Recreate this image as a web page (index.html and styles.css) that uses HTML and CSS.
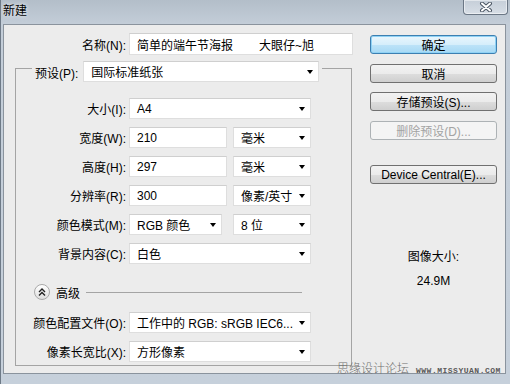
FILE: index.html
```html
<!DOCTYPE html>
<html lang="zh">
<head>
  <meta charset="UTF-8" />
  <title>新建</title>
  <link rel="stylesheet" href="styles.css">
</head>
<body>
  <div class="window">
    <div class="titlebar">
      <span class="title">新建</span>
      <div class="close-button">
        <svg width="16" height="10" viewBox="0 0 16 10">
          <path d="M4 1.5 L12 8.5 M12 1.5 L4 8.5" stroke="#4a5563" stroke-width="4" stroke-linecap="round" />
          <path d="M4 1.5 L12 8.5 M12 1.5 L4 8.5" stroke="#ffffff" stroke-width="2" stroke-linecap="round" />
        </svg>
      </div>
    </div>

    <div class="frame">
      <div class="panel">
        <div class="left-col">
          <div class="row name-row">
            <label class="label name-label">名称(N):</label>
            <div class="field input name-input">简单的端午节海报<span class="author">大眼仔~旭</span></div>
          </div>

          <fieldset class="preset-group">
            <legend class="preset-legend">
              <span class="legend-label">预设(P):</span>
              <div class="field select preset-select">国际标准纸张</div>
            </legend>

            <div class="row">
              <label class="label">大小(I):</label>
              <div class="field select wide">A4</div>
            </div>
            <div class="row">
              <label class="label">宽度(W):</label>
              <div class="field input short">210</div>
              <div class="field select unit">毫米</div>
            </div>
            <div class="row">
              <label class="label">高度(H):</label>
              <div class="field input short">297</div>
              <div class="field select unit">毫米</div>
            </div>
            <div class="row">
              <label class="label">分辨率(R):</label>
              <div class="field input short">300</div>
              <div class="field select unit">像素/英寸</div>
            </div>
            <div class="row">
              <label class="label">颜色模式(M):</label>
              <div class="field select mode">RGB 颜色</div>
              <div class="field select unit">8 位</div>
            </div>
            <div class="row">
              <label class="label">背景内容(C):</label>
              <div class="field select wide">白色</div>
            </div>

            <div class="advanced-row">
              <div class="toggle-circle">
                <svg width="10" height="10" viewBox="0 0 10 10">
                  <path d="M2 5 L5 2 L8 5 M2 8.5 L5 5.5 L8 8.5" fill="none" stroke="#222" stroke-width="1.4" />
                </svg>
              </div>
              <span class="advanced-text">高级</span>
              <div class="advanced-line"></div>
            </div>

            <div class="row">
              <label class="label">颜色配置文件(O):</label>
              <div class="field select wide">工作中的 RGB: sRGB IEC6...</div>
            </div>
            <div class="row">
              <label class="label">像素长宽比(X):</label>
              <div class="field select wide">方形像素</div>
            </div>
          </fieldset>
        </div>

        <div class="right-col">
          <button class="dlg-button default-button">确定</button>
          <button class="dlg-button">取消</button>
          <button class="dlg-button">存储预设(S)...</button>
          <button class="dlg-button" disabled>删除预设(D)...</button>
          <button class="dlg-button device-button">Device Central(E)...</button>

          <div class="image-size">
            <div class="size-title">图像大小:</div>
            <div class="size-value">24.9M</div>
          </div>
        </div>
      </div>
    </div>

    <!-- forum watermark over the corner -->
    <div class="watermark">
      <span class="wm-cn">思缘设计论坛</span>
      <span class="wm-url">WWW.MISSYUAN.COM</span>
    </div>
  </div>
</body>
</html>
```

FILE: styles.css
```css
* {
  box-sizing: border-box;
}

body {
  margin: 0;
  width: 510px;
  height: 384px;
  overflow: hidden;
  font-family: "Liberation Sans", "Noto Sans CJK SC", sans-serif;
  font-size: 12px;
  color: #000;
}

.window {
  position: relative;
  width: 510px;
  height: 384px;
  display: flex;
  flex-direction: column;
  background: linear-gradient(to bottom, #b3bec9, #c3cdd8 24px, #c6d0db);
  border-left: 1px solid #6e7a87;
}

.titlebar {
  height: 24px;
  display: flex;
  justify-content: space-between;
  align-items: flex-start;
  padding: 0 2px 0 2px;
}

.title {
  margin-top: 4px;
  font-size: 12px;
  line-height: 14px;
  text-shadow: 0 0 4px #fff;
}

.close-button {
  width: 45px;
  height: 15px;
  border: 1px solid #6b7785;
  border-top: none;
  border-radius: 0 0 4px 4px;
  background: linear-gradient(to bottom, #c5ced8, #d7dee6);
  box-shadow: inset 0 0 0 1px rgba(255, 255, 255, 0.5);
  display: flex;
  justify-content: center;
  align-items: center;
}

.frame {
  flex: 1;
  padding: 0 4px 10px 2px;
}

.panel {
  height: 350px;
  border: 1px solid #8a939d;
  background-color: #ececec;
  display: flex;
}

.left-col {
  width: 356px;
  padding-top: 8px;
}

.right-col {
  width: 127px;
  margin-left: 10px;
  padding-top: 10px;
  display: flex;
  flex-direction: column;
}

.row {
  display: flex;
  align-items: center;
  height: 21px;
  margin-top: 8px;
}

.name-row {
  height: 22px;
  margin-top: 0;
}

.label {
  width: 110px;
  margin-right: 3px;
  text-align: right;
  white-space: nowrap;
}

.name-label {
  width: 122px;
}

.field {
  height: 100%;
  background-color: #fff;
  border: 1px solid #dedede;
  border-top-color: #cfcfcf;
  display: flex;
  align-items: center;
  padding: 0 5px 0 7px;
  white-space: nowrap;
  overflow: hidden;
}

.select {
  justify-content: space-between;
}

.select::after {
  content: "";
  flex: none;
  width: 0;
  height: 0;
  border-left: 3.5px solid transparent;
  border-right: 3.5px solid transparent;
  border-top: 4px solid #000;
}

.name-input {
  width: 224px;
}

.author {
  margin-left: 26px;
}

.wide {
  width: 182px;
}

.short {
  width: 98px;
}

.unit {
  width: 78px;
  margin-left: 6px;
}

.mode {
  width: 93px;
  margin-right: 5px;
}

/* Preset group box */
.preset-group {
  margin: 6px 0 0 11px;
  width: 337px;
  padding: 15px 0 3px 0;
  border: 1px solid #a4a4a4;
  min-width: 0;
}

.preset-legend {
  height: 14px;
  margin-left: 16px;
  padding: 0 3px;
  display: flex;
  align-items: flex-start;
}

.legend-label {
  margin-top: 3px;
  margin-right: 5px;
  white-space: nowrap;
}

.preset-select {
  width: 236px;
  height: 21px;
  flex: none;
}

.advanced-row {
  display: flex;
  align-items: center;
  height: 20px;
  margin-top: 18px;
  margin-bottom: 10px;
  padding-left: 18px;
}

.toggle-circle {
  width: 16px;
  height: 16px;
  border-radius: 50%;
  border: 1px solid #a9a9a9;
  background: linear-gradient(to bottom, #ffffff, #dedede);
  display: flex;
  justify-content: center;
  align-items: center;
}

.advanced-text {
  margin-left: 6px;
}

.advanced-line {
  flex: 1;
  margin: 0 49px 0 6px;
  border-top: 1px solid #a4a4a4;
}

/* Buttons */
.dlg-button {
  height: 19px;
  width: 127px;
  margin-bottom: 9.5px;
  padding: 0;
  border: 1px solid #707070;
  border-radius: 3px;
  background: linear-gradient(to bottom, #f2f2f2 0%, #ebebeb 50%, #dddddd 51%, #cfcfcf 100%);
  font-family: inherit;
  font-size: 12px;
  color: #000;
}

.default-button {
  border-color: #3c7fb1;
  background: linear-gradient(to bottom, #e9f6fd 0%, #d6eefb 50%, #bde3f8 51%, #a7d9f5 100%);
  box-shadow: inset 0 0 0 1px #8fd2f5;
}

.dlg-button:disabled {
  border-color: #adb2b5;
  background: #f4f4f4;
  color: #a3a3a3;
}

.device-button {
  margin-top: 16px;
}

.image-size {
  margin-top: 56px;
  text-align: center;
  line-height: 15px;
}

.size-value {
  margin-top: 9px;
}

/* Watermark */
.watermark {
  position: absolute;
  left: 336px;
  top: 359px;
  display: flex;
  align-items: baseline;
  gap: 7px;
  white-space: nowrap;
}

.wm-cn {
  font-family: "Noto Sans CJK SC", sans-serif;
  font-size: 12px;
  font-weight: 300;
  color: #6f6f6f;
}

.wm-url {
  font-family: "Liberation Mono", monospace;
  font-size: 8px;
  font-weight: bold;
  color: #5a5a5a;
  letter-spacing: 0.5px;
}
```
